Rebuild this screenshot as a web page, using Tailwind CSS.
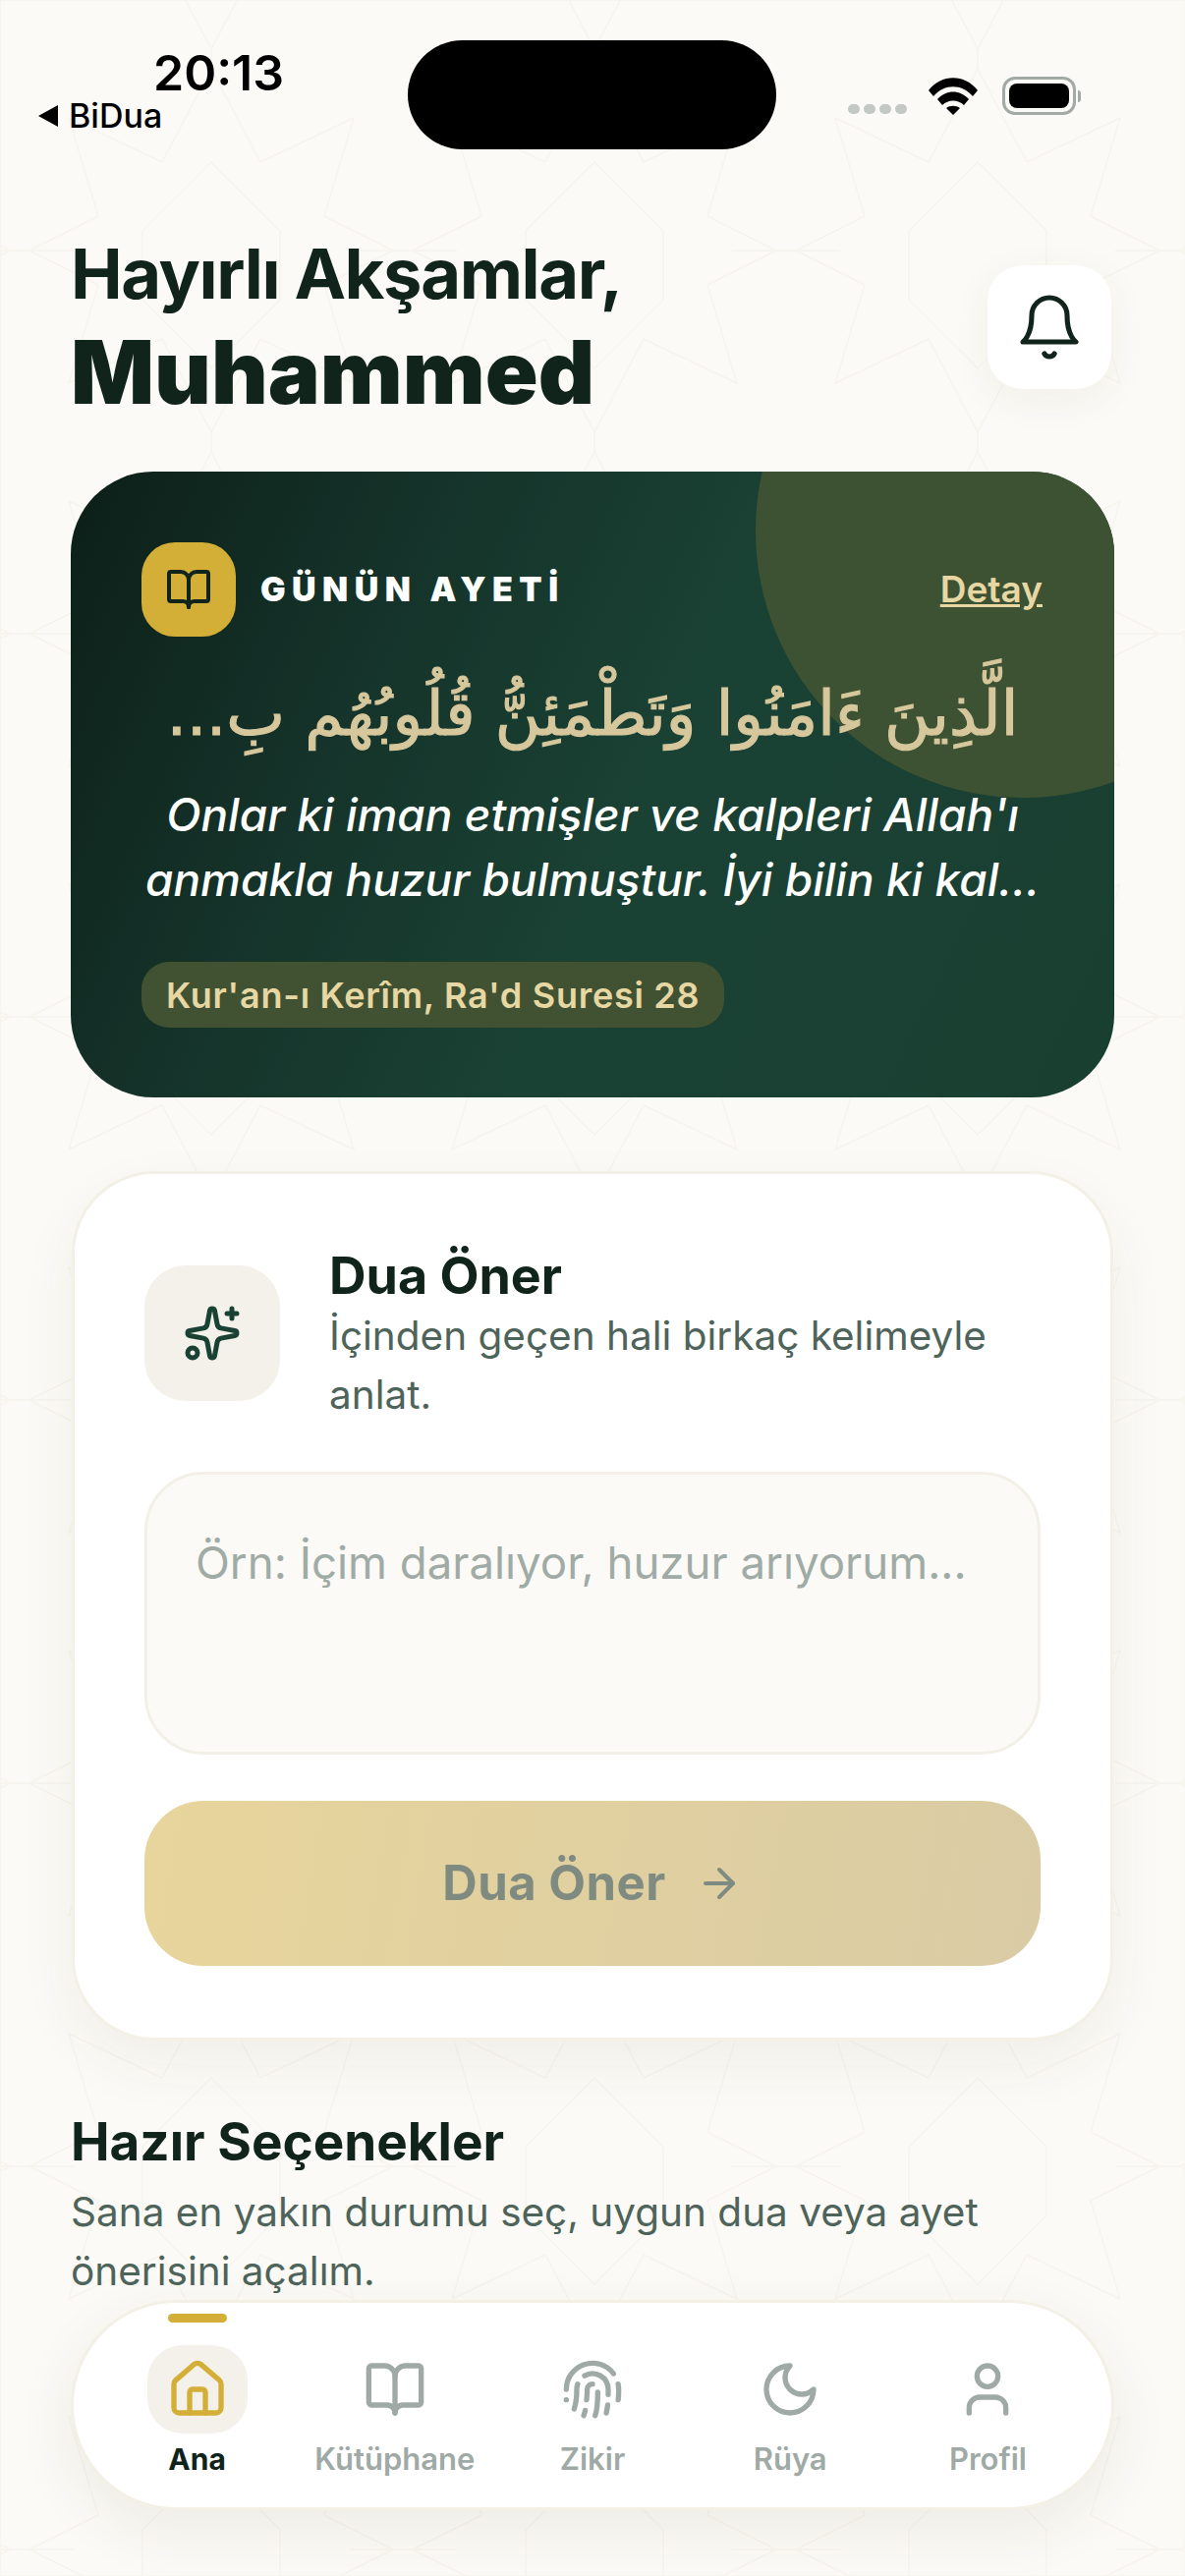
<!DOCTYPE html>
<html lang="tr">
<head>
  <meta charset="UTF-8" />
  <meta name="viewport" content="width=device-width, initial-scale=1.0"/>
  <title>BiDua</title>
  <script src="https://cdn.jsdelivr.net/npm/@tailwindcss/browser@4"></script>
</head>
<body class="bg-[#fbfaf6] font-['Inter',sans-serif] text-[#10241c]">
  <div class="relative w-[1206px] h-[2622px] overflow-hidden bg-[#fbfaf6]">

    <!-- faint geometric background -->
    <svg class="absolute inset-0 w-full h-full" fill="none" stroke="#f6f4ed" stroke-width="1.5">
      <defs>
        <pattern id="geo" width="390" height="390" patternUnits="userSpaceOnUse" x="20" y="60">
          <path d="M195 10l50 95 95-45-30 100 70 35-70 35 30 100-95-45-50 95-50-95-95 45 30-100-70-35 70-35-30-100 95 45z"/>
          <path d="M195 105l70 70v70l-70 70-70-70v-70zM0 195h55M335 195h55M195 0v10M195 380v10"/>
        </pattern>
      </defs>
      <rect width="1206" height="2622" fill="url(#geo)"/>
    </svg>

    <!-- dynamic island -->
    <div class="absolute left-[415px] top-[41px] w-[375px] h-[111px] rounded-[56px] bg-black"></div>

    <div class="relative">
      <!-- status bar -->
      <div class="h-[255px] pl-[38px] pr-[106px] pt-[46px] flex justify-between items-start">
        <div class="flex flex-col">
          <span class="ml-[118px] text-[50px] leading-[56px] font-semibold text-black">20:13</span>
          <div class="flex items-center gap-[10px] -mt-[2px]">
            <svg width="22" height="24" viewBox="0 0 22 24"><path d="M21 1v22L1 12z" fill="#000"/></svg>
            <span class="text-[34px] leading-[36px] font-medium text-black">BiDua</span>
          </div>
        </div>
        <div class="flex items-center gap-[22px] mt-[32px]">
          <div class="flex gap-[4px] mt-[26px]">
            <span class="w-[12px] h-[10px] rounded-full bg-[#c4c8c4]"></span>
            <span class="w-[12px] h-[10px] rounded-full bg-[#c4c8c4]"></span>
            <span class="w-[12px] h-[10px] rounded-full bg-[#c4c8c4]"></span>
            <span class="w-[12px] h-[10px] rounded-full bg-[#c4c8c4]"></span>
          </div>
          <svg width="50" height="38" viewBox="0 0 50 38"><path d="M0 13C13 -4 37 -4 50 13l-5 6C34 6 16 6 5 19z M9 22c9-10 23-10 32 0l-5 6c-6-6-16-6-22 0z M18 31c4-3 10-3 14 0l-7 7z" fill="#000"/></svg>
          <div class="flex items-center gap-[2px] ml-[3px]">
            <div class="w-[75px] h-[39px] rounded-[13px] border-[3px] border-[#a3aaa6] p-[4px]">
              <div class="w-full h-full rounded-[8px] bg-black"></div>
            </div>
            <span class="w-[3px] h-[12px] rounded-r-full bg-[#a3aaa6]"></span>
          </div>
        </div>
      </div>

      <div class="px-[72px]">
        <!-- greeting -->
        <div class="flex justify-between items-start">
          <div>
            <h1 class="text-[70.5px] leading-[68px] font-bold tracking-[-0.02em] -mt-[10px]">Hayırlı Akşamlar,</h1>
            <p class="mt-[16px] text-[89px] leading-[100px] font-black">Muhammed</p>
          </div>
          <div class="w-[126px] h-[126px] mt-[15px] mr-[3px] rounded-[36px] bg-white shadow-[0_10px_40px_rgba(60,60,30,0.06)] flex items-center justify-center">
            <svg width="72" height="72" viewBox="0 0 24 24" fill="none" stroke="#10241c" stroke-width="1.7" stroke-linecap="round" stroke-linejoin="round"><path d="M6 8a6 6 0 0 1 12 0c0 7 3 9 3 9H3s3-2 3-9"/><path d="M10.3 21a1.94 1.94 0 0 0 3.4 0"/></svg>
          </div>
        </div>

        <!-- verse card -->
        <div class="relative mt-[51px] h-[637px] rounded-[84px] overflow-hidden bg-[linear-gradient(115deg,#0c1f18_0%,#15332a_28%,#1a4234_55%,#193f31_100%)] px-[72px] pt-[72px]">
          <div class="absolute left-[697px] -top-[212px] w-[544px] h-[544px] rounded-full bg-[#3d5233]"></div>
          <div class="relative">
            <div class="flex items-center justify-between">
              <div class="flex items-center gap-[25px]">
                <div class="w-[96px] h-[96px] rounded-[34px] bg-[#d4af37] flex items-center justify-center">
                  <svg width="48" height="48" viewBox="0 0 24 24" fill="none" stroke="#10241c" stroke-width="2" stroke-linecap="round" stroke-linejoin="round"><path d="M12 7v14"/><path d="M3 18a1 1 0 0 1-1-1V4a1 1 0 0 1 1-1h5a4 4 0 0 1 4 4 4 4 0 0 1 4-4h5a1 1 0 0 1 1 1v13a1 1 0 0 1-1 1h-6a3 3 0 0 0-3 3 3 3 0 0 0-3-3z"/></svg>
                </div>
                <span class="text-[34px] leading-[40px] font-black tracking-[0.19em] text-white">GÜNÜN AYETİ</span>
              </div>
              <a class="-ml-[2px] mr-[1px] text-[37px] leading-[44px] font-semibold underline text-[#e6d7a3]">Detay</a>
            </div>
            <p dir="rtl" class="mt-[34px] text-center text-[63.5px] leading-[88px] [-webkit-text-stroke:1.2px_#d6c79c] text-[#d6c79c] font-['DejaVu_Sans',sans-serif] whitespace-nowrap">الَّذِينَ ءَامَنُوا وَتَطْمَئِنُّ قُلُوبُهُم بِ...</p>
            <p class="mt-[26px] text-center text-[46px] leading-[66px] italic font-medium text-white whitespace-nowrap">Onlar ki iman etmişler ve kalpleri Allah'ı<br>anmakla huzur bulmuştur. İyi bilin ki kal...</p>
            <div class="mt-[51px] inline-flex h-[67px] items-center rounded-[28px] bg-[#415233] px-[25px]">
              <span class="text-[36px] font-semibold tracking-[0.02em] text-[#e6d7a3]">Kur'an-ı Kerîm, Ra'd Suresi 28</span>
            </div>
          </div>
        </div>

        <!-- suggestion form -->
        <div class="mt-[75px] h-[885px] mx-[1px] rounded-[84px] border-[3px] border-[#f3f0e6] bg-white px-[71px] pt-[70px] shadow-[0_24px_60px_rgba(60,60,30,0.06)]">
          <div class="flex items-start gap-[50px]">
            <div class="mt-[23px] w-[138px] h-[138px] shrink-0 rounded-[42px] bg-[#f4f1ea] flex items-center justify-center">
              <svg width="60" height="60" viewBox="0 0 24 24" fill="none" stroke="#1a4234" stroke-width="2" stroke-linecap="round" stroke-linejoin="round"><path d="M11.017 2.814a1 1 0 0 1 1.966 0l1.051 5.558a2 2 0 0 0 1.594 1.594l5.558 1.051a1 1 0 0 1 0 1.966l-5.558 1.051a2 2 0 0 0-1.594 1.594l-1.051 5.558a1 1 0 0 1-1.966 0l-1.051-5.558a2 2 0 0 0-1.594-1.594l-5.558-1.051a1 1 0 0 1 0-1.966l5.558-1.051a2 2 0 0 0 1.594-1.594z"/><path d="M20 2v4"/><path d="M22 4h-4"/><circle cx="4" cy="20" r="2"/></svg>
            </div>
            <div class="pt-[3px]">
              <h2 class="text-[52px] leading-[62px] font-bold">Dua Öner</h2>
              <p class="text-[40.5px] leading-[60px] text-[#4e635a]">İçinden geçen hali birkaç kelimeyle<br>anlat.</p>
            </div>
          </div>
          <div class="mt-[48px] h-[288px] rounded-[60px] border-[3px] border-[#f2f0e7] bg-[#fbfaf6] px-[49px] pt-[60px]">
            <p class="text-[45.6px] leading-[60px] text-[#a0aba6] whitespace-nowrap">Örn: İçim daralıyor, huzur arıyorum...</p>
          </div>
          <div class="mt-[47px] h-[168px] rounded-[60px] bg-[linear-gradient(100deg,#e8d59c,#d9cba4)] flex items-center justify-center gap-[30px]">
            <span class="text-[49px] font-bold tracking-[0.01em] text-[#7f8b80]">Dua Öner</span>
            <svg width="48" height="48" viewBox="0 0 24 24" fill="none" stroke="#7f8b80" stroke-width="2" stroke-linecap="round" stroke-linejoin="round"><path d="M5 12h14"/><path d="m12 5 7 7-7 7"/></svg>
          </div>
        </div>

        <!-- presets -->
        <h2 class="mt-[72px] text-[53px] leading-[62px] font-bold">Hazır Seçenekler</h2>
        <p class="mt-[11px] text-[40.5px] leading-[60px] text-[#4e635a] whitespace-nowrap">Sana en yakın durumu seç, uygun dua veya ayet<br>önerisini açalım.</p>
      </div>
    </div>

    <!-- bottom tab bar -->
    <nav class="absolute left-[72px] top-[2341px] w-[1062px] h-[214px] rounded-[107px] border-[3px] border-[#f3f0e6] bg-white shadow-[0_20px_60px_rgba(60,60,30,0.08)] px-[25px] grid grid-cols-5">
      <div class="relative flex flex-col items-center pt-[43px]">
        <span class="absolute top-[11px] w-[60px] h-[9px] rounded-full bg-[#d4af37]"></span>
        <div class="w-[102px] h-[90px] rounded-[36px] bg-[#f4f1ea] flex items-center justify-center">
          <svg width="64" height="64" viewBox="0 0 24 24" fill="none" stroke="#d4af37" stroke-width="2" stroke-linecap="round" stroke-linejoin="round"><path d="M15 21v-8a1 1 0 0 0-1-1h-4a1 1 0 0 0-1 1v8"/><path d="M3 10a2 2 0 0 1 .709-1.528l7-6a2 2 0 0 1 2.582 0l7 6A2 2 0 0 1 21 10v9a2 2 0 0 1-2 2H5a2 2 0 0 1-2-2z"/></svg>
        </div>
        <span class="mt-[7px] text-[30px] leading-[38px] font-bold text-[#10241c]">Ana</span>
      </div>
      <div class="flex flex-col items-center pt-[43px]">
        <div class="h-[90px] flex items-center justify-center">
          <svg width="64" height="64" viewBox="0 0 24 24" fill="none" stroke="#9faaa6" stroke-width="2" stroke-linecap="round" stroke-linejoin="round"><path d="M12 7v14"/><path d="M3 18a1 1 0 0 1-1-1V4a1 1 0 0 1 1-1h5a4 4 0 0 1 4 4 4 4 0 0 1 4-4h5a1 1 0 0 1 1 1v13a1 1 0 0 1-1 1h-6a3 3 0 0 0-3 3 3 3 0 0 0-3-3z"/></svg>
        </div>
        <span class="mt-[7px] text-[31px] leading-[38px] font-semibold text-[#9faaa6]">Kütüphane</span>
      </div>
      <div class="flex flex-col items-center pt-[43px]">
        <div class="h-[90px] flex items-center justify-center">
          <svg width="64" height="64" viewBox="0 0 24 24" fill="none" stroke="#9faaa6" stroke-width="2" stroke-linecap="round" stroke-linejoin="round"><path d="M12 10a2 2 0 0 0-2 2c0 1.02-.1 2.51-.26 4"/><path d="M14 13.12c0 2.38 0 6.38-1 8.88"/><path d="M17.29 21.02c.12-.6.43-2.3.5-3.02"/><path d="M2 12a10 10 0 0 1 18-6"/><path d="M2 16h.01"/><path d="M21.8 16c.2-2 .131-5.354 0-6"/><path d="M5 19.5C5.5 18 6 15 6 12a6 6 0 0 1 .34-2"/><path d="M8.65 22c.21-.66.45-1.32.57-2"/><path d="M9 6.8a6 6 0 0 1 9 5.2v2"/></svg>
        </div>
        <span class="mt-[7px] text-[31px] leading-[38px] font-semibold text-[#9faaa6]">Zikir</span>
      </div>
      <div class="flex flex-col items-center pt-[43px]">
        <div class="h-[90px] flex items-center justify-center">
          <svg width="64" height="64" viewBox="0 0 24 24" fill="none" stroke="#9faaa6" stroke-width="2" stroke-linecap="round" stroke-linejoin="round"><path d="M12 3a6 6 0 0 0 9 9 9 9 0 1 1-9-9Z"/></svg>
        </div>
        <span class="mt-[7px] text-[31px] leading-[38px] font-semibold text-[#9faaa6]">Rüya</span>
      </div>
      <div class="flex flex-col items-center pt-[43px]">
        <div class="h-[90px] flex items-center justify-center">
          <svg width="64" height="64" viewBox="0 0 24 24" fill="none" stroke="#9faaa6" stroke-width="2" stroke-linecap="round" stroke-linejoin="round"><path d="M19 21v-2a4 4 0 0 0-4-4H9a4 4 0 0 0-4 4v2"/><circle cx="12" cy="7" r="4"/></svg>
        </div>
        <span class="mt-[7px] text-[31px] leading-[38px] font-semibold text-[#9faaa6]">Profil</span>
      </div>
    </nav>
  </div>
</body>
</html>
